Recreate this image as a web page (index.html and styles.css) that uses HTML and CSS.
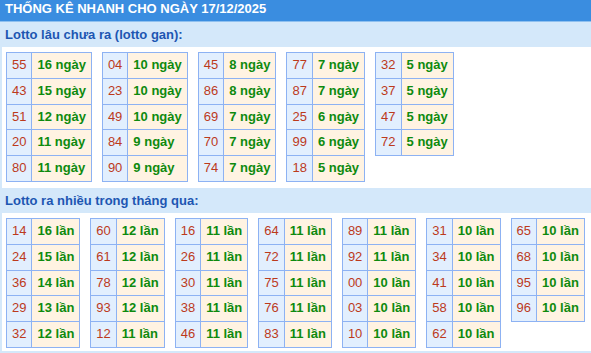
FILE: index.html
```html
<!DOCTYPE html>
<html lang="vi">
<head>
<meta charset="utf-8">
<title>Thống kê nhanh</title>
<link rel="stylesheet" href="styles.css">
</head>
<body>
<div class="box">
  <div class="top">THỐNG KÊ NHANH CHO NGÀY 17/12/2025</div>
  <div class="sec">Lotto lâu chưa ra (lotto gan):</div>
  <div class="area area-first">
    <table class="t"><tr><td class="n">55</td><td class="v">16 ngày</td></tr><tr><td class="n">43</td><td class="v">15 ngày</td></tr><tr><td class="n">51</td><td class="v">12 ngày</td></tr><tr><td class="n">20</td><td class="v">11 ngày</td></tr><tr><td class="n">80</td><td class="v">11 ngày</td></tr></table>
    <table class="t"><tr><td class="n">04</td><td class="v">10 ngày</td></tr><tr><td class="n">23</td><td class="v">10 ngày</td></tr><tr><td class="n">49</td><td class="v">10 ngày</td></tr><tr><td class="n">84</td><td class="v">9 ngày</td></tr><tr><td class="n">90</td><td class="v">9 ngày</td></tr></table>
    <table class="t"><tr><td class="n">45</td><td class="v">8 ngày</td></tr><tr><td class="n">86</td><td class="v">8 ngày</td></tr><tr><td class="n">69</td><td class="v">7 ngày</td></tr><tr><td class="n">70</td><td class="v">7 ngày</td></tr><tr><td class="n">74</td><td class="v">7 ngày</td></tr></table>
    <table class="t"><tr><td class="n">77</td><td class="v">7 ngày</td></tr><tr><td class="n">87</td><td class="v">7 ngày</td></tr><tr><td class="n">25</td><td class="v">6 ngày</td></tr><tr><td class="n">99</td><td class="v">6 ngày</td></tr><tr><td class="n">18</td><td class="v">5 ngày</td></tr></table>
    <table class="t"><tr><td class="n">32</td><td class="v">5 ngày</td></tr><tr><td class="n">37</td><td class="v">5 ngày</td></tr><tr><td class="n">47</td><td class="v">5 ngày</td></tr><tr><td class="n">72</td><td class="v">5 ngày</td></tr></table>
  </div>
  <div class="sec">Lotto ra nhiều trong tháng qua:</div>
  <div class="area area-last">
    <table class="t"><tr><td class="n">14</td><td class="v">16 lần</td></tr><tr><td class="n">24</td><td class="v">15 lần</td></tr><tr><td class="n">36</td><td class="v">14 lần</td></tr><tr><td class="n">29</td><td class="v">13 lần</td></tr><tr><td class="n">32</td><td class="v">12 lần</td></tr></table>
    <table class="t"><tr><td class="n">60</td><td class="v">12 lần</td></tr><tr><td class="n">61</td><td class="v">12 lần</td></tr><tr><td class="n">78</td><td class="v">12 lần</td></tr><tr><td class="n">93</td><td class="v">12 lần</td></tr><tr><td class="n">12</td><td class="v">11 lần</td></tr></table>
    <table class="t"><tr><td class="n">16</td><td class="v">11 lần</td></tr><tr><td class="n">26</td><td class="v">11 lần</td></tr><tr><td class="n">30</td><td class="v">11 lần</td></tr><tr><td class="n">38</td><td class="v">11 lần</td></tr><tr><td class="n">46</td><td class="v">11 lần</td></tr></table>
    <table class="t"><tr><td class="n">64</td><td class="v">11 lần</td></tr><tr><td class="n">72</td><td class="v">11 lần</td></tr><tr><td class="n">75</td><td class="v">11 lần</td></tr><tr><td class="n">76</td><td class="v">11 lần</td></tr><tr><td class="n">83</td><td class="v">11 lần</td></tr></table>
    <table class="t"><tr><td class="n">89</td><td class="v">11 lần</td></tr><tr><td class="n">92</td><td class="v">11 lần</td></tr><tr><td class="n">00</td><td class="v">10 lần</td></tr><tr><td class="n">03</td><td class="v">10 lần</td></tr><tr><td class="n">10</td><td class="v">10 lần</td></tr></table>
    <table class="t"><tr><td class="n">31</td><td class="v">10 lần</td></tr><tr><td class="n">34</td><td class="v">10 lần</td></tr><tr><td class="n">41</td><td class="v">10 lần</td></tr><tr><td class="n">58</td><td class="v">10 lần</td></tr><tr><td class="n">62</td><td class="v">10 lần</td></tr></table>
    <table class="t"><tr><td class="n">65</td><td class="v">10 lần</td></tr><tr><td class="n">68</td><td class="v">10 lần</td></tr><tr><td class="n">95</td><td class="v">10 lần</td></tr><tr><td class="n">96</td><td class="v">10 lần</td></tr></table>
  </div>
</div>
</body>
</html>
```

FILE: styles.css
```css
html, body {
  margin: 0;
  padding: 0;
  background: #ffffff;
  overflow: hidden;
}
body {
  font-family: "Liberation Sans", Arial, sans-serif;
  font-size: 13px;
}
.box {
  border-left: 2px solid #d4e8fa;
  border-bottom: 2px solid #d4e8fa;
}
.top {
  height: 21px;
  line-height: 17px;
  background: #3a8de0;
  color: #ffffff;
  font-weight: bold;
  margin-left: -2px;
  padding-left: 5px;
  border-bottom: 1px solid #8fc0ef;
}
.sec {
  height: 25px;
  line-height: 25px;
  background: #d4e8fa;
  color: #1d56b2;
  font-weight: bold;
  padding-left: 3px;
}
.area {
  display: flex;
  align-items: flex-start;
  gap: 10px;
  padding: 5px 4px 6px;
}
.area-last {
  padding-bottom: 3px;
}
.t {
  border-collapse: collapse;
}
.t td {
  border: 1px solid #8db2f3;
  padding: 4px 5px 4.8px;
  line-height: 16px;
  white-space: nowrap;
}
.t .n {
  background: #e2effe;
  color: #bc3a1c;
  text-align: center;
}
.t .v {
  background: #fff3e2;
  color: #0e8a0e;
  font-weight: bold;
}
```
